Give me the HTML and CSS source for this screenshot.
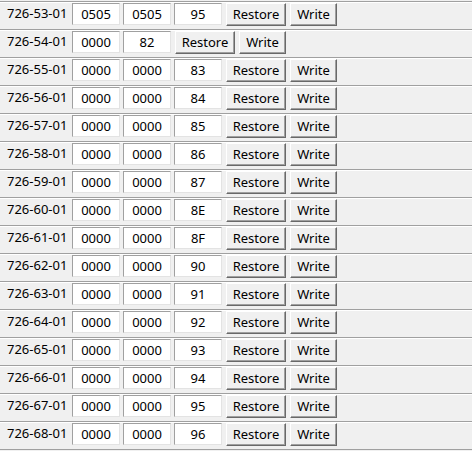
FILE: index.html
```html
<!DOCTYPE html>
<html lang="en">

<head>
    <meta charset="UTF-8">
    <meta name="viewport" content="width=device-width, initial-scale=1.0">
    <title>Registers</title>
    <link rel="stylesheet" href="styles.css">
</head>

<body>
    <div class="table">
        <div class="row">
            <span class="label">726-53-01</span>
            <input class="cell" value="0505">
            <input class="cell" value="0505">
            <input class="cell" value="95">
            <button class="btn btn-restore">Restore</button>
            <button class="btn btn-write">Write</button>
        </div>
        <div class="row">
            <span class="label">726-54-01</span>
            <input class="cell" value="0000">
            <input class="cell" value="82">
            <button class="btn btn-restore">Restore</button>
            <button class="btn btn-write">Write</button>
        </div>
        <div class="row">
            <span class="label">726-55-01</span>
            <input class="cell" value="0000">
            <input class="cell" value="0000">
            <input class="cell" value="83">
            <button class="btn btn-restore">Restore</button>
            <button class="btn btn-write">Write</button>
        </div>
        <div class="row">
            <span class="label">726-56-01</span>
            <input class="cell" value="0000">
            <input class="cell" value="0000">
            <input class="cell" value="84">
            <button class="btn btn-restore">Restore</button>
            <button class="btn btn-write">Write</button>
        </div>
        <div class="row">
            <span class="label">726-57-01</span>
            <input class="cell" value="0000">
            <input class="cell" value="0000">
            <input class="cell" value="85">
            <button class="btn btn-restore">Restore</button>
            <button class="btn btn-write">Write</button>
        </div>
        <div class="row">
            <span class="label">726-58-01</span>
            <input class="cell" value="0000">
            <input class="cell" value="0000">
            <input class="cell" value="86">
            <button class="btn btn-restore">Restore</button>
            <button class="btn btn-write">Write</button>
        </div>
        <div class="row">
            <span class="label">726-59-01</span>
            <input class="cell" value="0000">
            <input class="cell" value="0000">
            <input class="cell" value="87">
            <button class="btn btn-restore">Restore</button>
            <button class="btn btn-write">Write</button>
        </div>
        <div class="row">
            <span class="label">726-60-01</span>
            <input class="cell" value="0000">
            <input class="cell" value="0000">
            <input class="cell" value="8E">
            <button class="btn btn-restore">Restore</button>
            <button class="btn btn-write">Write</button>
        </div>
        <div class="row">
            <span class="label">726-61-01</span>
            <input class="cell" value="0000">
            <input class="cell" value="0000">
            <input class="cell" value="8F">
            <button class="btn btn-restore">Restore</button>
            <button class="btn btn-write">Write</button>
        </div>
        <div class="row">
            <span class="label">726-62-01</span>
            <input class="cell" value="0000">
            <input class="cell" value="0000">
            <input class="cell" value="90">
            <button class="btn btn-restore">Restore</button>
            <button class="btn btn-write">Write</button>
        </div>
        <div class="row">
            <span class="label">726-63-01</span>
            <input class="cell" value="0000">
            <input class="cell" value="0000">
            <input class="cell" value="91">
            <button class="btn btn-restore">Restore</button>
            <button class="btn btn-write">Write</button>
        </div>
        <div class="row">
            <span class="label">726-64-01</span>
            <input class="cell" value="0000">
            <input class="cell" value="0000">
            <input class="cell" value="92">
            <button class="btn btn-restore">Restore</button>
            <button class="btn btn-write">Write</button>
        </div>
        <div class="row">
            <span class="label">726-65-01</span>
            <input class="cell" value="0000">
            <input class="cell" value="0000">
            <input class="cell" value="93">
            <button class="btn btn-restore">Restore</button>
            <button class="btn btn-write">Write</button>
        </div>
        <div class="row">
            <span class="label">726-66-01</span>
            <input class="cell" value="0000">
            <input class="cell" value="0000">
            <input class="cell" value="94">
            <button class="btn btn-restore">Restore</button>
            <button class="btn btn-write">Write</button>
        </div>
        <div class="row">
            <span class="label">726-67-01</span>
            <input class="cell" value="0000">
            <input class="cell" value="0000">
            <input class="cell" value="95">
            <button class="btn btn-restore">Restore</button>
            <button class="btn btn-write">Write</button>
        </div>
        <div class="row">
            <span class="label">726-68-01</span>
            <input class="cell" value="0000">
            <input class="cell" value="0000">
            <input class="cell" value="96">
            <button class="btn btn-restore">Restore</button>
            <button class="btn btn-write">Write</button>
        </div>
    </div>
</body>

</html>
```

FILE: styles.css
```css
* {
    box-sizing: border-box;
}

body {
    margin: 0;
    background-color: #f0f0f0;
    font-family: "Noto Sans", "Liberation Sans", sans-serif;
    font-size: 13px;
    color: #000000;
}

.table {
    padding-top: 1px;
    border-bottom: 1px solid #a0a0a0;
}

.row {
    display: flex;
    align-items: flex-start;
    gap: 3px;
    height: 28px;
    border-top: 1px solid #a0a0a0;
    box-shadow: inset 0 1px 0 #ffffff;
    padding-top: 1px;
}

.label {
    width: 69px;
    padding-left: 7px;
    line-height: 21px;
}

.cell {
    width: 48px;
    height: 22px;
    margin: 0;
    padding: 0;
    font: inherit;
    line-height: 1;
    text-align: center;
    background-color: #ffffff;
    border: 1px solid;
    border-color: #a0a0a0 #e3e3e3 #e3e3e3 #a0a0a0;
    outline: none;
}

.btn {
    height: 23px;
    margin: 0 0 0 1px;
    padding: 0;
    font: inherit;
    line-height: 1;
    color: #000000;
    background-color: #f0f0f0;
    border: 1px solid;
    border-color: #ffffff #696969 #696969 #ffffff;
    box-shadow: inset -1px -1px 0 #a0a0a0;
}

.btn-restore {
    width: 60px;
}

.btn-write {
    width: 47px;
}
```
